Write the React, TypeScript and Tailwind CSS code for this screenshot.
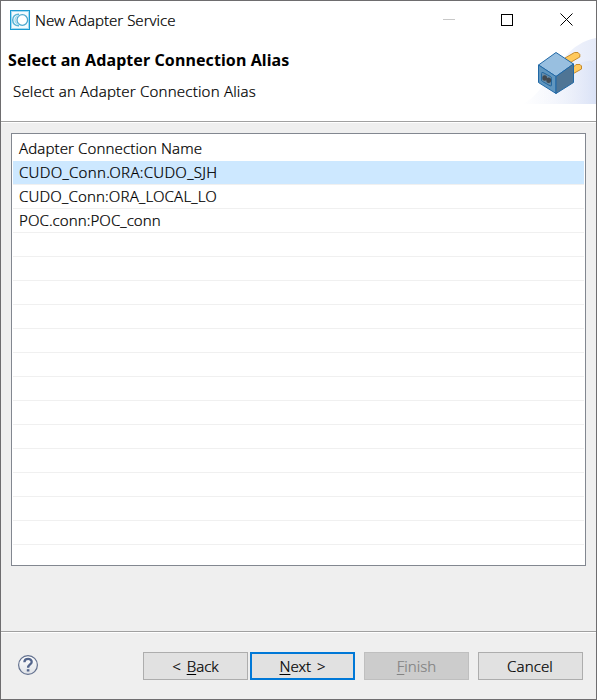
import React from "react";

const connections = [
  { name: "CUDO_Conn.ORA:CUDO_SJH", spacing: "tracking-[0.27px]" },
  { name: "CUDO_Conn:ORA_LOCAL_LO", spacing: "tracking-[0.15px]" },
  { name: "POC.conn:POC_conn", spacing: "tracking-[0.06px]" },
];
const emptyRows = Array.from({ length: 13 }, (_, i) => i);

function AppIcon() {
  return (
    <svg width="20" height="20" viewBox="0 0 20 20" fill="none">
      <rect x="0.5" y="0.5" width="19" height="19" fill="#f4fbfe" stroke="#1b9cd3" />
      <rect x="1.5" y="1.5" width="17" height="17" stroke="#a8daf0" />
      <circle cx="12.3" cy="10" r="5.3" fill="#ffffff" stroke="#4fa9cf" strokeWidth="1.3" />
      <path d="M9 4.200C5 4 2.700 6.700 2.700 10s2.300 6 6.300 5.800" stroke="#57b4d6" strokeWidth="1.500" />
      <path d="M9 5.500C6 6.500 5 8 5 10s1 3.500 4 4.500" stroke="#9fd6ea" strokeWidth="1.200" />
    </svg>
  );
}

function PlugBanner() {
  return (
    <svg width="76" height="66" viewBox="0 0 76 66" fill="none">
      <defs>
        <linearGradient id="sky" x1="0" y1="0" x2="1" y2="0">
          <stop offset="0" stopColor="#ffffff" />
          <stop offset="1" stopColor="#e6ebf9" />
        </linearGradient>
        <linearGradient id="hill" x1="0" y1="0" x2="1" y2="0">
          <stop offset="0" stopColor="#ffffff" stopOpacity="0" />
          <stop offset="1" stopColor="#dae2f6" />
        </linearGradient>
      </defs>
      <path d="M2 66C18 60 27 39 44 20 53 9 64 2 76 0V66Z" fill="url(#sky)" />
      <path d="M16 66C28 42 48 23 76 22V66Z" fill="url(#hill)" />
      <path d="M45 20 54.500 14.500H58L59.800 16.500V19L49.500 25Z" fill="#ffc95c" stroke="#c58a2c" />
      <path d="M53.500 29 56 26.500H60L61.500 28V31L53.500 35.500Z" fill="#ffc95c" stroke="#c58a2c" />
      <path d="M36 14.500 53.500 26 36 38.500 18.500 27Z" fill="#98bfe0" stroke="#2068a6" />
      <path d="M18.500 27 36 38.500V55.500L18.500 44.500Z" fill="#6096bf" stroke="#2068a6" />
      <path d="M53.500 26V44.500L36 55.500V38.500Z" fill="#4f7595" stroke="#2068a6" />
      <path d="M21.500 35.500Q21.500 34 23 34.500L30.500 38.500Q31.500 39 31.500 40.500V47Q31.500 48.500 30 47.800L22.500 43.500Q21.500 43 21.500 42Z" fill="#658ba8" stroke="#2368a0" />
      <ellipse cx="24.700" cy="40" rx="2.400" ry="2.700" fill="#414950" />
      <ellipse cx="28.700" cy="42.300" rx="2.400" ry="2.700" fill="#414950" />
    </svg>
  );
}

export default function App() {
  return (
    <div className="flex h-[700px] w-[597px] flex-col overflow-hidden border border-[#6e6d6f] bg-[#efefef] font-['Noto_Sans','Open_Sans',sans-serif] text-[15px] leading-6 font-light text-black whitespace-nowrap [-webkit-text-stroke-width:0.2px]">
      <header className="flex h-[120px] shrink-0 flex-col bg-white">
        <div className="flex h-[37px] shrink-0 items-center pl-[9px]">
          <AppIcon />
          <span className="ml-[5px]">New Adapter Service</span>
          <svg className="mr-[23px] ml-auto" width="130" height="13" viewBox="0 0 130 13" fill="none">
            <path d="M0 6.500H12" stroke="#c8c8c8" />
            <rect x="58.500" y="1.500" width="11" height="11" stroke="#000" />
            <path d="M117.500.500l12 12m0-12-12 12" stroke="#000" />
          </svg>
        </div>
        <div className="flex justify-between">
          <div className="flex flex-col pt-[10px] pl-[7px]">
            <h1 className="text-[16px] font-bold tracking-[0.09px] [-webkit-text-stroke-width:0px]">Select an Adapter Connection Alias</h1>
            <p className="mt-[7px] pl-[5px] tracking-[0.19px]">Select an Adapter Connection Alias</p>
          </div>
          <PlugBanner />
        </div>
      </header>
      <div className="h-[2px] shrink-0 border-t border-[#a0a0a0] bg-white" />
      <main className="flex h-[508px] shrink-0 flex-col px-[10px] pt-[10px]">
        <div className="h-[433px] border border-[#828790] bg-white px-px">
          <div className="h-[27px] pt-[2px] pl-[6px] tracking-[0.1px]">Adapter Connection Name</div>
          {connections.map((c, i) => (
            <div
              key={c.name}
              className={`h-6 border-b border-[#f0f0f0] pl-[6px] leading-[22px] ${i === 0 ? "bg-[#cde8ff]" : ""}`}
            >
              <span className={c.spacing}>{c.name}</span>
            </div>
          ))}
          {emptyRows.map((i) => (
            <div key={i} className="h-6 border-b border-[#f0f0f0]" />
          ))}
        </div>
      </main>
      <div className="h-[2px] shrink-0 border-t border-[#a0a0a0] bg-white" />
      <footer className="flex flex-1 items-start pt-[19px] pl-[17px]">
        <svg className="mt-[3px]" width="21" height="21" viewBox="0 0 21 21" fill="none">
          <defs>
            <linearGradient id="help" x1="0" y1="0" x2="0" y2="1">
              <stop stopColor="#ffffff" />
              <stop offset="1" stopColor="#dfe2e7" />
            </linearGradient>
          </defs>
          <circle cx="10" cy="10" r="9.400" fill="url(#help)" stroke="#63718f" strokeWidth="1.200" />
          <path d="M6.400 7.200C6.500 2.800 13.900 3 13.700 7c-.1 2.500-3.600 2.600-3.600 5.800" stroke="#53658c" strokeWidth="2.300" />
          <rect x="8.800" y="14.200" width="2.600" height="2.300" fill="#53658c" />
        </svg>
        <button className="ml-[104px] h-7 w-[105px] border border-[#adadad] bg-[#e1e1e1] leading-[26px] [word-spacing:2px]">
          &lt; <span className="underline underline-offset-2">B</span>ack
        </button>
        <button className="ml-[2px] h-7 w-[105px] border-2 border-[#0078d7] bg-[#e1e1e1] leading-6 [word-spacing:2px]">
          <span className="underline underline-offset-2">N</span>ext &gt;
        </button>
        <button className="ml-[9px] h-7 w-[105px] border border-[#bfbfbf] bg-[#cccccc] leading-[26px] text-[#838383]" disabled>
          <span className="underline underline-offset-2">F</span>inish
        </button>
        <button className="ml-[9px] h-7 w-[105px] border border-[#adadad] bg-[#e1e1e1] pr-px leading-[26px] tracking-[0.1px]">Cancel</button>
      </footer>
    </div>
  );
}
